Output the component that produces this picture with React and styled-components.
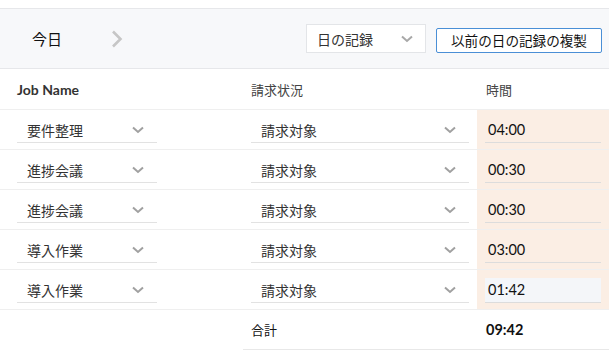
import React from "react";
import styled, { createGlobalStyle } from "styled-components";

const Global = createGlobalStyle`
  html, body { margin: 0; padding: 0; background: #fff; }
  body { font-family: Lato, "Noto Sans CJK JP", sans-serif; color: #333; }
  * { box-sizing: border-box; }
`;

const Page = styled.div`
  padding-top: 8px;
  width: 609px;
  overflow: hidden;
`;

const Toolbar = styled.div`
  display: flex;
  align-items: center;
  height: 61px;
  background: #f7f8fa;
  border-top: 1px solid #e6e7ea;
  border-bottom: 1px solid #e6e7ea;
  padding: 0 7px 0 32px;
`;

const Today = styled.span`
  font-family: "Noto Sans CJK JP", sans-serif;
  font-size: 15px;
  color: #111;
  width: 79px;
`;

const NextBtn = styled.span`
  display: flex;
  align-items: center;
`;

const Spacer = styled.div`
  flex: 1;
`;

const BoxSelect = styled.div`
  display: flex;
  align-items: center;
  justify-content: space-between;
  width: 120px;
  height: 29px;
  background: #fff;
  border: 1px solid #e3e5e8;
  padding: 0 12px 0 10px;
  font-family: "Noto Sans CJK JP", sans-serif;
  font-size: 14px;
  color: #333;
  margin-right: 10px;
`;

const CopyButton = styled.button`
  height: 25px;
  width: 166px;
  padding: 0;
  background: #fff;
  border: 1px solid #4a8fd6;
  border-radius: 2px;
  font-family: "Noto Sans CJK JP", sans-serif;
  font-size: 13.6px;
  color: #111;
  margin-top: 3px;
`;

const Row = styled.div`
  display: grid;
  grid-template-columns: 243px 234px 1fr;
  height: ${(p) => (p.$head ? 41 : 40)}px;
  border-bottom: ${(p) => (p.$noLine ? "none" : "1px solid #efefef")};
`;

const Cell = styled.div`
  display: flex;
  align-items: center;
  padding: 0 8px;
  background: ${(p) => (p.$peach ? "#fbeee4" : "transparent")};
  border-bottom: ${(p) => (p.$line ? "1px solid #e8e8e8" : "none")};
  ${(p) => p.$first && "padding-left: 17px;"}
`;

const HeadText = styled.span`
  font-size: 13px;
  color: #444;
  font-family: "Noto Sans CJK JP", sans-serif;
  margin-left: ${(p) => p.$shift || 0}px;
`;

const JobHead = styled.span`
  font-family: Lato, sans-serif;
  font-weight: 700;
  font-size: 14px;
  color: #333;
`;

const LineSelect = styled.div`
  display: flex;
  align-items: center;
  justify-content: space-between;
  width: ${(p) => p.$w}px;
  height: 25px;
  border-bottom: 1px solid #e2e2e2;
  padding: 0 13px 0 10px;
  font-family: "Noto Sans CJK JP", sans-serif;
  font-size: 14px;
  color: #333;
  margin-top: 1px;
`;

const TimeInput = styled.div`
  display: flex;
  align-items: center;
  width: calc(100% + 8px);
  height: 25px;
  border-bottom: 1px solid #dcdcdc;
  background: ${(p) => (p.$active ? "#f4f6f9" : "transparent")};
  padding-left: 3px;
  font-family: Lato, sans-serif;
  font-size: 14.5px;
  color: #111;
  margin-top: 1px;
`;

const TotalLabel = styled.span`
  font-family: "Noto Sans CJK JP", sans-serif;
  font-size: 13px;
  color: #111;
`;

const TotalValue = styled.span`
  font-family: Lato, sans-serif;
  font-weight: 700;
  font-size: 14.5px;
  color: #111;
  padding-left: 1px;
`;

const ChevronDown = ({ color = "#a0a0a0" }) => (
  <svg width="12" height="8" viewBox="0 0 12 8">
    <polyline points="1,1.5 6,6 11,1.5" fill="none" stroke={color} strokeWidth="2" />
  </svg>
);

const ChevronRight = () => (
  <svg width="12" height="18" viewBox="0 0 12 18">
    <polyline points="2,1.5 9.5,9 2,16.5" fill="none" stroke="#c6c6c6" strokeWidth="2.6" />
  </svg>
);

const rows = [
  { job: "要件整理", time: "04:00" },
  { job: "進捗会議", time: "00:30" },
  { job: "進捗会議", time: "00:30" },
  { job: "導入作業", time: "03:00" },
  { job: "導入作業", time: "01:42", active: true },
];

export default function App() {
  return (
    <Page>
      <Global />
      <Toolbar>
        <Today>今日</Today>
        <NextBtn>
          <ChevronRight />
        </NextBtn>
        <Spacer />
        <BoxSelect>
          <span>日の記録</span>
          <ChevronDown color="#a8a8a8" />
        </BoxSelect>
        <CopyButton>以前の日の記録の複製</CopyButton>
      </Toolbar>
      <Row $head>
        <Cell $first>
          <JobHead>Job Name</JobHead>
        </Cell>
        <Cell>
          <HeadText>請求状況</HeadText>
        </Cell>
        <Cell>
          <HeadText $shift={1}>時間</HeadText>
        </Cell>
      </Row>
      {rows.map((r, i) => (
        <Row key={i}>
          <Cell $first>
            <LineSelect $w={140}>
              <span>{r.job}</span>
              <ChevronDown />
            </LineSelect>
          </Cell>
          <Cell>
            <LineSelect $w={218}>
              <span>請求対象</span>
              <ChevronDown />
            </LineSelect>
          </Cell>
          <Cell $peach>
            <TimeInput $active={r.active}>{r.time}</TimeInput>
          </Cell>
        </Row>
      ))}
      <Row $noLine>
        <Cell />
        <Cell $line>
          <TotalLabel>合計</TotalLabel>
        </Cell>
        <Cell $line>
          <TotalValue>09:42</TotalValue>
        </Cell>
      </Row>
    </Page>
  );
}
